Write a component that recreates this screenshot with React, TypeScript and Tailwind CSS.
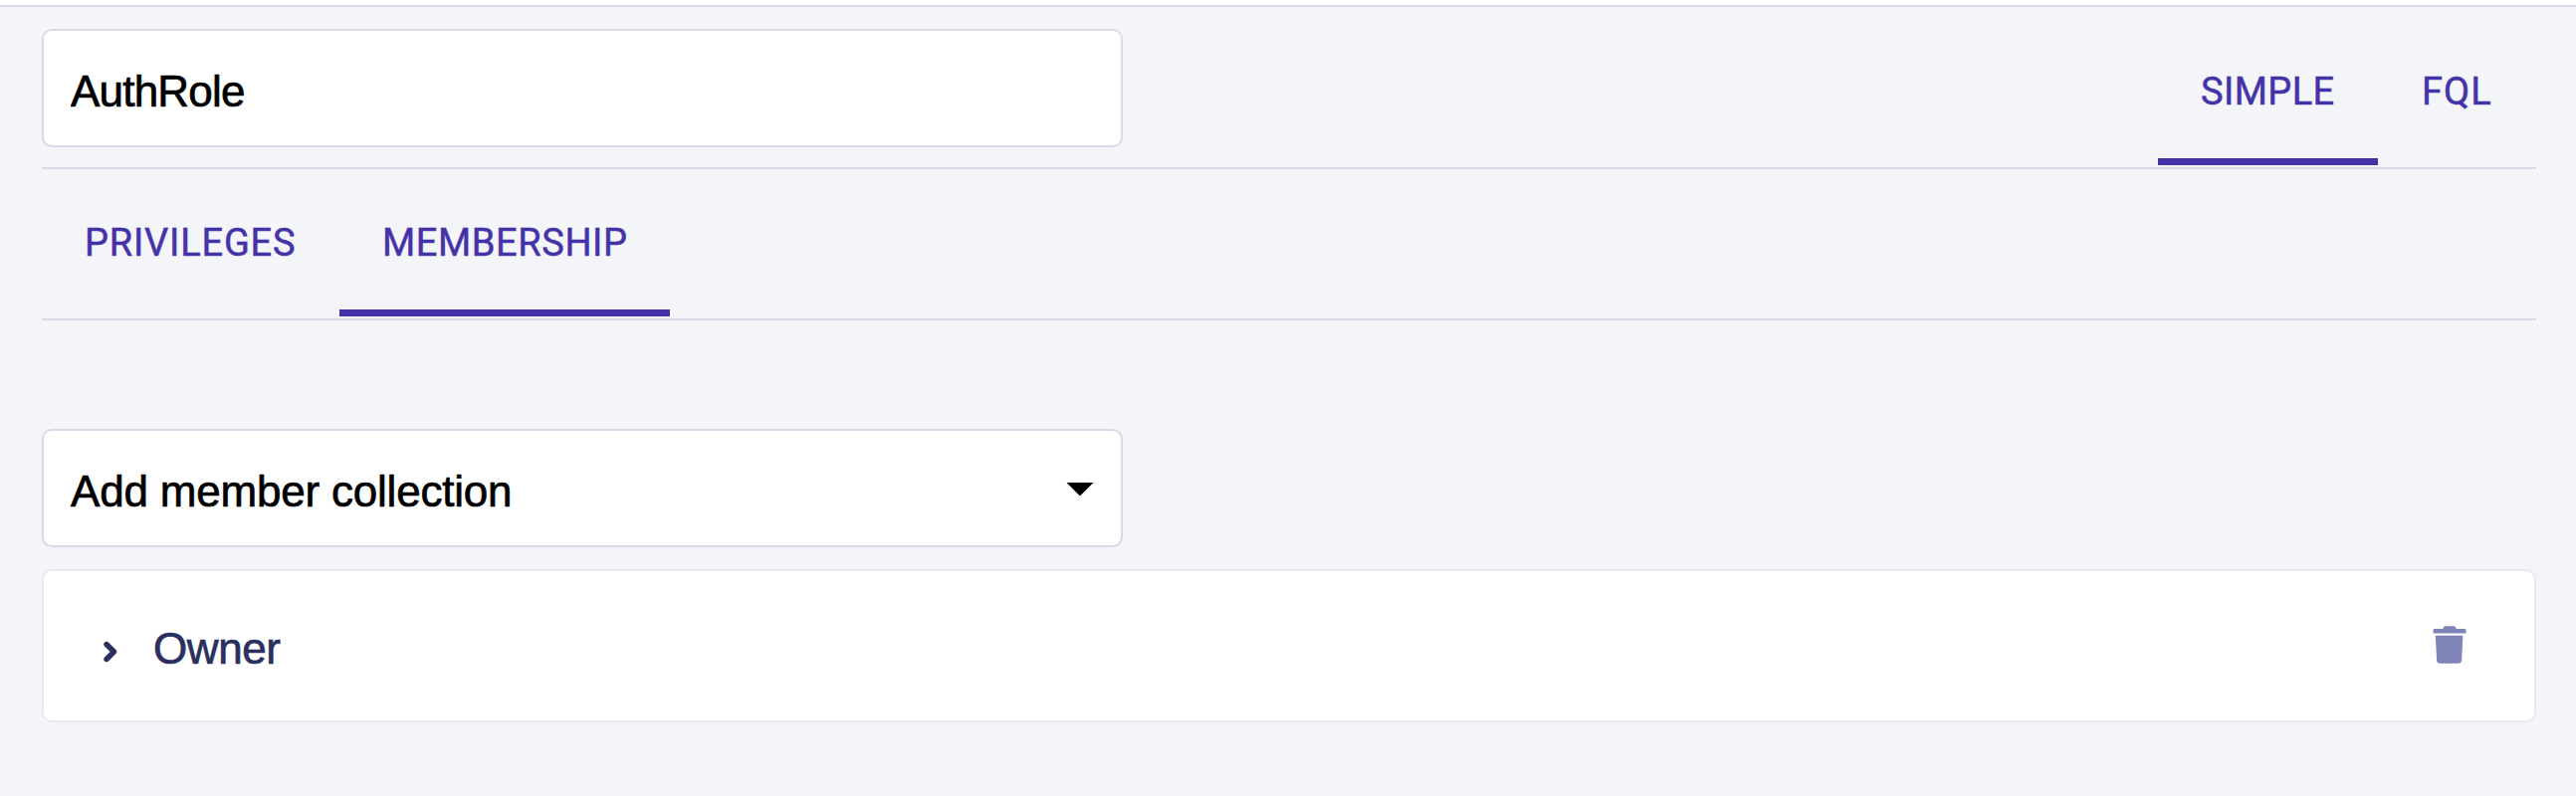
import React from "react";

type TabProps = { label: string; active?: boolean; className: string; text: string };

function Tab({ label, active = false, className, text }: TabProps) {
  return (
    <button
      type="button"
      className={`flex h-full flex-col whitespace-nowrap font-['Roboto',sans-serif] text-[38px] leading-[44px] text-[#4632a8] [-webkit-text-stroke:0.5px_#4632a8] ${className}`}
    >
      <span className={`flex flex-1 items-start ${text}`}>{label}</span>
      <span className={`mb-[2px] h-[7px] w-full ${active ? "bg-[#4632a8]" : ""}`} />
    </button>
  );
}

function TrashIcon() {
  return (
    <svg className="-mt-[2px]" width="34" height="39" viewBox="0 0 34 39" fill="#7f83b8" aria-hidden="true">
      <path d="M2 3h8.5c.3-1.9 1-2.7 2.3-2.7h8.4c1.3 0 2 .8 2.3 2.7H32c1 0 1.5.6 1.5 1.5v3H.5v-3C.5 3.6 1 3 2 3Z" />
      <path d="M2.8 9.8h27.6l-1.3 24.6c-.2 2.3-1.3 3.3-3.3 3.3H7.4c-2 0-3.1-1-3.3-3.3Z" />
    </svg>
  );
}

export default function App() {
  return (
    <div className="h-[800px] w-full bg-white pt-[5px] font-['Liberation_Sans',sans-serif]">
      <main className="flex h-[795px] flex-col border-t-2 border-[#d9d9e9] bg-[#f3f5f9] pr-10 pl-[42px]">
        <header className="flex h-[163px] items-start justify-between border-b-2 border-[#d9d9e9] pt-[22px]">
          <input
            aria-label="Role name"
            defaultValue="AuthRole"
            className="h-[119px] w-[1086px] rounded-[10px] border-2 border-[#d9d9e9] bg-white px-[27px] pt-1.5 text-[44px] tracking-[-0.8px] text-black outline-none [-webkit-text-stroke:0.7px_black]"
          />
          <nav className="-mt-[22px] flex h-[161px] pt-[22px]">
            <Tab label="SIMPLE" active className="w-[221px]" text="pt-[41px] pl-[43px] tracking-[0.4px]" />
            <Tab label="FQL" className="w-[159px]" text="pt-[41px] pl-[44px] tracking-[1px]" />
          </nav>
        </header>
        <nav className="flex h-[152px] shrink-0 border-b-2 border-[#d9d9e9]">
          <Tab label="PRIVILEGES" className="w-[299px]" text="pt-[52px] pl-[43px] tracking-[0.8px]" />
          <Tab label="MEMBERSHIP" active className="w-[332px]" text="pt-[52px] pl-[43px] tracking-[0.6px]" />
        </nav>
        <button
          type="button"
          className="mt-[109px] flex h-[119px] w-[1086px] shrink-0 items-center justify-between rounded-[10px] border-2 border-[#d9d9e9] bg-white pr-[27px] pl-[27px] text-[44px] text-black"
        >
          <span className="pt-1.5 tracking-[-0.2px] [-webkit-text-stroke:0.7px_black]">Add member collection</span>
          <svg className="mt-[2px]" width="28" height="14" viewBox="0 0 28 14" aria-hidden="true">
            <path d="M0.5 0h27L14 13.5Z" />
          </svg>
        </button>
        <section className="mt-[22px] flex h-[154px] shrink-0 items-center rounded-[10px] border-2 border-[#e8e8ee] bg-white pr-[68px] pl-[59px] text-[44px] text-[#2b2f5f]">
          <svg className="mt-3" width="16" height="22" viewBox="0 0 16 22" fill="none" stroke="#2b2f5f" strokeWidth="5.4" strokeLinecap="round" strokeLinejoin="round" aria-hidden="true">
            <path d="M4 3.5 11.5 11 4 18.5" />
          </svg>
          <span className="ml-[35px] flex-1 pt-1.5 tracking-[-0.4px] [-webkit-text-stroke:0.7px_#2b2f5f]">Owner</span>
          <TrashIcon />
        </section>
      </main>
    </div>
  );
}
